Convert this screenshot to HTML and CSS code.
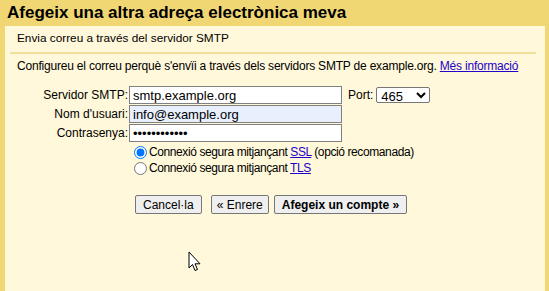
FILE: index.html
```html
<!DOCTYPE html>
<html lang="ca">
<head>
<meta charset="UTF-8">
<title>Afegeix una altra adreça electrònica meva</title>
<link rel="stylesheet" href="styles.css">
</head>
<body>
<div class="header">Afegeix una altra adreça electrònica meva</div>
<div class="panel">
<div class="subhead">Envia correu a través del servidor SMTP</div>
<div class="rule"></div>
<p class="intro">Configureu el correu perquè s'envïi a través dels servidors SMTP de example.org. <a href="#">Més informació</a></p>
<div class="form">
<label class="lbl">Servidor SMTP:</label>
<input class="field" type="text" value="smtp.example.org">
<div class="port">Port: <select><option>465</option></select></div>
<label class="lbl">Nom d'usuari:</label>
<input class="field filled" type="text" value="info@example.org">
<div></div>
<label class="lbl">Contrasenya:</label>
<input class="field" type="password" value="............">
<div></div>
</div>
<div class="radios">
<label><input type="radio" name="sec" checked><span>Connexió segura mitjançant <a href="#">SSL</a> (opció recomanada)</span></label>
<label><input type="radio" name="sec"><span>Connexió segura mitjançant <a href="#">TLS</a></span></label>
</div>
<div class="buttons">
<button>Cancel·la</button>
<button class="back">« Enrere</button>
<button class="main">Afegeix un compte »</button>
</div>
</div>
<svg class="cursor" width="14" height="22" viewBox="0 0 14 22"><path d="M1 1 L1 17 L4.5 13.5 L7 19.5 L9.5 18.5 L7 12.8 L12 12.8 Z" fill="#fff" stroke="#000" stroke-width="1" stroke-linejoin="round"/></svg>
</body>
</html>
```

FILE: styles.css
```css
body { margin: 0; height: 291px; overflow: hidden; background: #f0d774; font-family: Arial, "Liberation Sans", sans-serif; font-size: 12px; color: #000; display: flex; flex-direction: column; position: relative; }
.header { height: 26px; line-height: 26px; padding-left: 7px; font-size: 17px; font-weight: bold; }
.panel { flex: 1; margin: 0 4px 0 5px; background: #fff8da; }
.subhead { padding: 5px 0 0 12px; line-height: 14px; font-size: 11.8px; }
.rule { height: 2px; background: #efdf9a; margin: 7px 9px 0 5px; }
.intro { margin: 0; padding: 5px 0 0 12px; line-height: 14px; letter-spacing: -0.2px; }
a { color: #2200cc; text-decoration: underline; }
.form { display: grid; grid-template-columns: 124px 213px auto; grid-auto-rows: 18px; row-gap: 1px; align-items: center; margin-top: 13px; }
.lbl { text-align: right; padding-right: 1px; }
.field { box-sizing: border-box; width: 213px; height: 18px; margin: 0; border: 1px solid #808080; padding: 0 3px; font-family: Arial, "Liberation Sans", sans-serif; font-size: 13px; background: #fff; }
.filled { background: #e8f0fe; }
.port { padding-left: 6px; display: flex; align-items: center; gap: 3px; }
.port select { box-sizing: border-box; width: 54px; font-family: Arial, "Liberation Sans", sans-serif; font-size: 13px; height: 16px; padding: 0; border: 1px solid #767676; border-radius: 2px; background: #fff; }
.radios { display: flex; flex-direction: column; padding-left: 129px; margin-top: 2px; }
.radios label { display: flex; align-items: center; height: 16px; letter-spacing: -0.4px; }
.radios input { margin: 0 2px 0 0; width: 13px; height: 13px; }
.buttons { display: flex; gap: 5px; padding-left: 130px; margin-top: 19px; }
.buttons button { box-sizing: border-box; font-family: Arial, "Liberation Sans", sans-serif; font-size: 12px; height: 19px; padding: 0 7px; background: #efefef; border: 1px solid #767676; border-radius: 2px; color: #000; }
.buttons .back { margin-left: 4px; padding: 0 5px; }
.buttons .main { font-weight: bold; }
.cursor { position: absolute; left: 188px; top: 251px; }
```
